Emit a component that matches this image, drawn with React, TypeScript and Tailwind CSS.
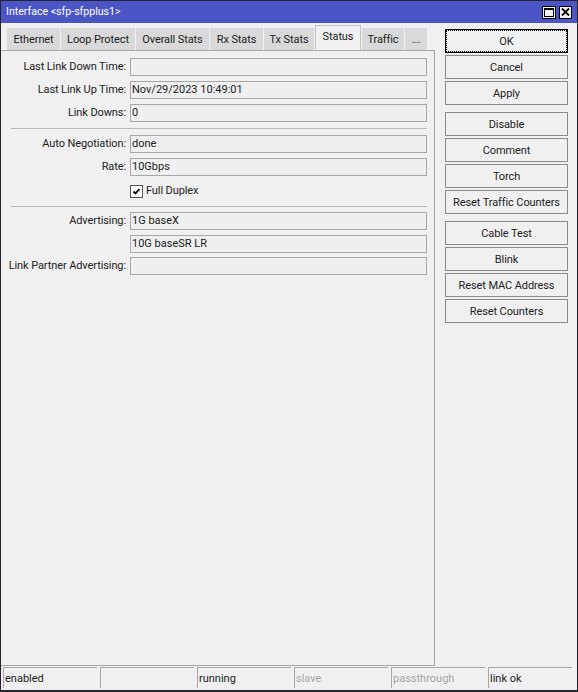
const font = "font-['Roboto','Liberation_Sans',Arial,sans-serif]";

function Field({ label, value, className }: { label?: string; value?: string; className?: string }) {
  return (
    <div className={`flex items-center h-[18px] ${className ?? ""}`}>
      <div className="w-[126px] pr-[1px] text-right text-[11px] tracking-[-0.1px] text-[#222] whitespace-nowrap">{label ? `${label}:` : ""}</div>
      <div className="ml-[3px] w-[297px] h-[18px] border border-[#a8a8a8] bg-[#efefef] pl-[1px] text-[11px] leading-[16px] text-[#222] whitespace-nowrap">{value}</div>
    </div>
  );
}

function Btn({ label, primary }: { label: string; primary?: boolean }) {
  return (
    <div className={`w-[123px] h-[24px] pt-[2px] flex items-center justify-center bg-[#f0f0f0] text-[11px] tracking-[-0.1px] text-[#222] whitespace-nowrap ${primary ? "border border-black outline-1 outline-dotted outline-black -outline-offset-2" : "border border-[#8a8a8a]"}`}>{label}</div>
  );
}

function Tab({ label, w, active }: { label: string; w: string; active?: boolean }) {
  return (
    <div className={`${w} flex items-center justify-center text-[11px] tracking-[-0.1px] text-[#222] whitespace-nowrap ${active ? "h-[25px] bg-[#f0f0f0] border-x border-t border-[#c4c4c4] pb-[1px]" : "h-[22px] bg-[#d9d9d9] pt-[2px]"}`}>{label}</div>
  );
}

function Cell({ w, label, dim }: { w: string; label?: string; dim?: boolean }) {
  return (
    <div className={`${w} h-[21px] border-t border-l border-[#a8a8a8] pl-[1px] text-[11px] leading-[22px] whitespace-nowrap ${dim ? "text-[#a5a5a5]" : "text-[#222]"}`}>{label}</div>
  );
}

export default function App() {
  return (
    <div className={`${font} w-[578px] h-[692px] flex flex-col bg-[#f0f0f0] border border-b-2 border-[#22242e] overflow-hidden`}>
      <div className="h-[22px] shrink-0 bg-[#4b55c6] flex items-center justify-between pl-[5px] pr-[5px]">
        <span className="text-[10.6px] text-white whitespace-nowrap">{"Interface <sfp-sfpplus1>"}</span>
        <div className="flex gap-[3px]">
          <div className="w-[14px] h-[13px] bg-[#f0f0f0] border border-black flex items-center justify-center">
            <div className="w-[10px] h-[9px] border border-black border-t-2" />
          </div>
          <div className="w-[13px] h-[13px] bg-[#f0f0f0] border border-black flex items-center justify-center">
            <svg width="9" height="8" viewBox="0 0 9 8"><path d="M1 0.5L8 7.5M8 0.5L1 7.5" stroke="#000" strokeWidth="1.8" /></svg>
          </div>
        </div>
      </div>
      <div className="flex-1 flex bg-[#f0f0f0] min-h-0">
        <div className="w-[434px] shrink-0 flex flex-col">
          <div className="h-[27px] shrink-0 flex items-end pl-[6px] gap-[1px]">
            <Tab label="Ethernet" w="w-[53px]" />
            <Tab label="Loop Protect" w="w-[74px]" />
            <Tab label="Overall Stats" w="w-[73px]" />
            <Tab label="Rx Stats" w="w-[53px]" />
            <Tab label="Tx Stats" w="w-[50px]" />
            <Tab label="Status" w="w-[46px]" active />
            <Tab label="Traffic" w="w-[42px]" />
            <Tab label="..." w="w-[22px]" />
          </div>
          <div className="flex-1 border-t border-r border-b border-[#a8a8a8] pt-[7px] flex flex-col gap-[5px]">
            <Field label="Last Link Down Time" />
            <Field label="Last Link Up Time" value="Nov/29/2023 10:49:01" />
            <Field label="Link Downs" value="0" />
            <div className="h-px bg-[#b8b8b8] ml-[10px] mr-[7px] mt-[1px] mb-[1px]" />
            <Field label="Auto Negotiation" value="done" />
            <Field label="Rate" value="10Gbps" />
            <div className="flex items-center h-[18px] pl-[129px] gap-[3px] mt-[1px]">
              <div className="w-[13px] h-[13px] bg-white border border-[#555] flex items-center justify-center">
                <svg width="9" height="9" viewBox="0 0 9 9"><path d="M1.5 4.5L3.5 6.5L7.5 2" fill="none" stroke="#000" strokeWidth="1.8" /></svg>
              </div>
              <span className="text-[11px] tracking-[-0.1px] text-[#222] whitespace-nowrap">Full Duplex</span>
            </div>
            <div className="h-px bg-[#b8b8b8] ml-[10px] mr-[7px] mt-[1px]" />
            <Field label="Advertising" value="1G baseX" />
            <Field value="10G baseSR LR" />
            <Field label="Link Partner Advertising" className="-mt-[1px]" />
          </div>
        </div>
        <div className="flex-1 flex flex-col pl-[10px] pt-[6px]">
          <div className="flex flex-col gap-[2px]">
            <Btn label="OK" primary />
            <Btn label="Cancel" />
            <Btn label="Apply" />
          </div>
          <div className="flex flex-col gap-[2px] mt-[7px]">
            <Btn label="Disable" />
            <Btn label="Comment" />
            <Btn label="Torch" />
            <Btn label="Reset Traffic Counters" />
          </div>
          <div className="flex flex-col gap-[2px] mt-[7px]">
            <Btn label="Cable Test" />
            <Btn label="Blink" />
            <Btn label="Reset MAC Address" />
            <Btn label="Reset Counters" />
          </div>
        </div>
      </div>
      <div className="h-[24px] shrink-0 flex gap-[3px] pl-[2px] pt-[1px]">
        <Cell w="w-[94px]" label="enabled" />
        <Cell w="w-[94px]" />
        <Cell w="w-[94px]" label="running" />
        <Cell w="w-[94px]" label="slave" dim />
        <Cell w="w-[94px]" label="passthrough" dim />
        <Cell w="w-[84px]" label="link ok" />
      </div>
    </div>
  );
}
